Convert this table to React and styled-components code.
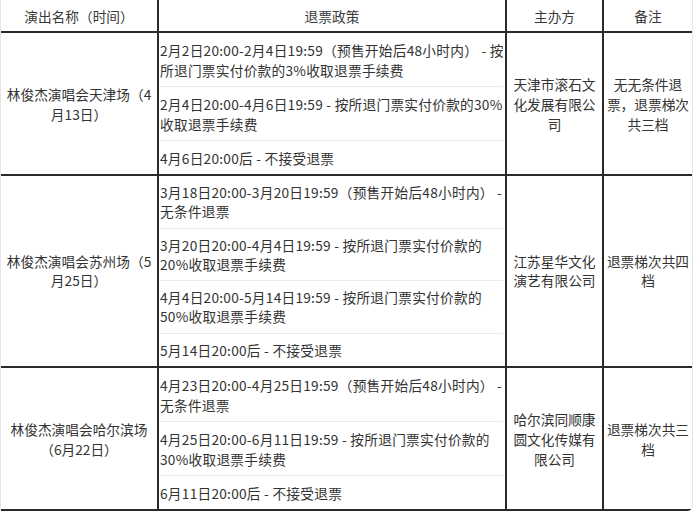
import React from "react";
import styled, { createGlobalStyle } from "styled-components";

const GlobalStyle = createGlobalStyle`
  html, body {
    margin: 0;
    padding: 0;
    overflow: hidden;
    background: #fff;
  }
  body {
    font-family: "Noto Sans CJK SC", "Noto Sans", sans-serif;
    color: #333;
  }
`;

const Frame = styled.div`
  width: 693px;
  box-sizing: border-box;
  border-left: 1px solid #e6e6e6;
  border-right: 1px solid #e6e6e6;
  border-bottom-right-radius: 5px;
  overflow: hidden;
  font-size: 13.7px;
  line-height: 20px;
`;

const Row = styled.div`
  display: grid;
  grid-template-columns: 158px 348px 97px 1fr;
  border-bottom: 2px solid #2a2a2a;
  min-height: ${(props) => (props.head ? "31px" : "0")};
  line-height: ${(props) => (props.tight ? "19px" : "20px")};
`;

const Cell = styled.div`
  box-sizing: border-box;
  display: flex;
  flex-direction: column;
  justify-content: center;
  align-items: ${(props) => (props.left ? "stretch" : "center")};
  text-align: ${(props) => (props.left ? "left" : "center")};
  padding: ${(props) => props.pad || "0 3px"};
  border-right: ${(props) => (props.last ? "none" : "2px solid #2a2a2a")};
`;

const HeadCell = styled(Cell)`
  color: #3a3a3a;
  line-height: 20px;
`;

const PolicyCell = styled(Cell)`
  letter-spacing: 0.25px;
`;

const PolicyItem = styled.div`
  padding: 7px 0 ${(props) => (props.tight ? "6.5px" : "6px")};
  border-bottom: 1px solid #ebebeb;

  &:last-child {
    border-bottom: none;
  }
`;

const Line = styled.span`
  display: block;
  white-space: nowrap;
`;

const Lines = ({ lines }) => (
  <>
    {lines.map((l, i) => (
      <Line key={i}>{l}</Line>
    ))}
  </>
);

const shows = [
  {
    name: ["林俊杰演唱会天津场（4", "月13日）"],
    policies: [
      ["2月2日20:00-2月4日19:59（预售开始后48小时内） - 按", "所退门票实付价款的3%收取退票手续费"],
      ["2月4日20:00-4月6日19:59 - 按所退门票实付价款的30%", "收取退票手续费"],
      ["4月6日20:00后 - 不接受退票"],
    ],
    organizer: ["天津市滚石文", "化发展有限公", "司"],
    remark: ["无无条件退", "票，退票梯次", "共三档"],
  },
  {
    tight: true,
    name: ["林俊杰演唱会苏州场（5", "月25日）"],
    policies: [
      ["3月18日20:00-3月20日19:59（预售开始后48小时内） -", "无条件退票"],
      ["3月20日20:00-4月4日19:59 - 按所退门票实付价款的", "20%收取退票手续费"],
      ["4月4日20:00-5月14日19:59 - 按所退门票实付价款的", "50%收取退票手续费"],
      ["5月14日20:00后 - 不接受退票"],
    ],
    organizer: ["江苏星华文化", "演艺有限公司"],
    remark: ["退票梯次共四", "档"],
  },
  {
    name: ["林俊杰演唱会哈尔滨场", "（6月22日）"],
    policies: [
      ["4月23日20:00-4月25日19:59（预售开始后48小时内） -", "无条件退票"],
      ["4月25日20:00-6月11日19:59 - 按所退门票实付价款的", "30%收取退票手续费"],
      ["6月11日20:00后 - 不接受退票"],
    ],
    organizer: ["哈尔滨同顺康", "圆文化传媒有", "限公司"],
    remark: ["退票梯次共三", "档"],
  },
];

const App = () => {
  return (
    <>
      <GlobalStyle />
      <Frame>
        <Row head>
          <HeadCell>演出名称（时间）</HeadCell>
          <HeadCell>退票政策</HeadCell>
          <HeadCell>主办方</HeadCell>
          <HeadCell last>备注</HeadCell>
        </Row>
        {shows.map((s, i) => (
          <Row key={i} tight={s.tight}>
            <Cell>
              <Lines lines={s.name} />
            </Cell>
            <PolicyCell left pad="0 2px 0 1px">
              {s.policies.map((p, j) => (
                <PolicyItem key={j} tight={s.tight}>
                  <Lines lines={p} />
                </PolicyItem>
              ))}
            </PolicyCell>
            <Cell pad="0 4px">
              <Lines lines={s.organizer} />
            </Cell>
            <Cell last pad="0 1px">
              <Lines lines={s.remark} />
            </Cell>
          </Row>
        ))}
      </Frame>
    </>
  );
};

export default App;
